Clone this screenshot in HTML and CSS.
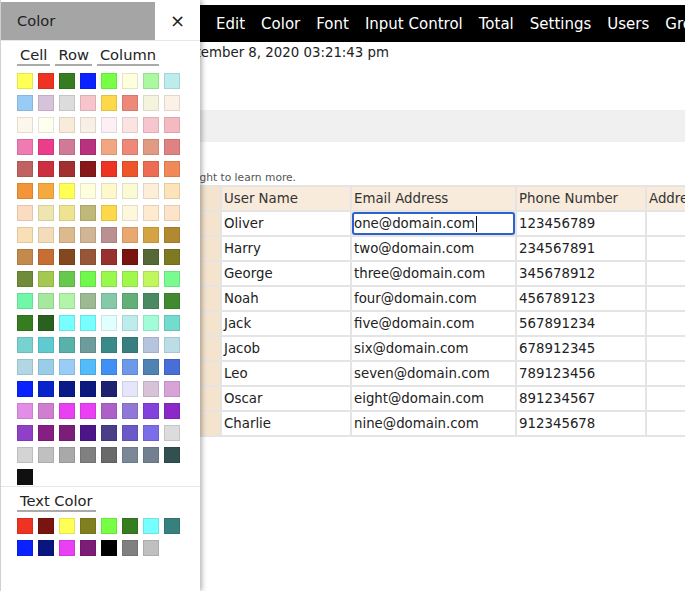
FILE: index.html
```html
<!DOCTYPE html>
<html lang="en">
<head>
<meta charset="utf-8">
<title>Grid</title>
<link rel="stylesheet" href="styles.css">
</head>
<body>
<div class="app">
  <nav class="menubar">
    <span class="menu-item">Edit</span>
    <span class="menu-item">Color</span>
    <span class="menu-item">Font</span>
    <span class="menu-item">Input Control</span>
    <span class="menu-item">Total</span>
    <span class="menu-item">Settings</span>
    <span class="menu-item">Users</span>
    <span class="menu-item">Groups</span>
  </nav>
  <div class="stamp"><span>September 8, 2020 03:21:43 pm</span></div>
  <div class="toolbar"></div>
  <p class="hint"><span>Select a cell and use the menu on the right to learn more.</span></p>
  <div class="sheet-wrap">
    <table class="sheet">
      <colgroup>
        <col class="c-rh"><col class="c-name"><col class="c-email"><col class="c-phone"><col class="c-addr">
      </colgroup>
      <thead>
        <tr><th class="rh"></th><th>User Name</th><th>Email Address</th><th>Phone Number</th><th>Address</th></tr>
      </thead>
      <tbody>
        <tr><td class="rh"></td><td>Oliver</td><td class="active">one@domain.com<span class="caret"></span></td><td>123456789</td><td></td></tr>
        <tr><td class="rh"></td><td>Harry</td><td>two@domain.com</td><td>234567891</td><td></td></tr>
        <tr><td class="rh"></td><td>George</td><td>three@domain.com</td><td>345678912</td><td></td></tr>
        <tr><td class="rh"></td><td>Noah</td><td>four@domain.com</td><td>456789123</td><td></td></tr>
        <tr><td class="rh"></td><td>Jack</td><td>five@domain.com</td><td>567891234</td><td></td></tr>
        <tr><td class="rh"></td><td>Jacob</td><td>six@domain.com</td><td>678912345</td><td></td></tr>
        <tr><td class="rh"></td><td>Leo</td><td>seven@domain.com</td><td>789123456</td><td></td></tr>
        <tr><td class="rh"></td><td>Oscar</td><td>eight@domain.com</td><td>891234567</td><td></td></tr>
        <tr><td class="rh"></td><td>Charlie</td><td>nine@domain.com</td><td>912345678</td><td></td></tr>
      </tbody>
    </table>
  </div>
</div>

<aside class="panel">
  <div class="panel-head">
    <div class="panel-title">Color</div>
    <div class="panel-close">×</div>
  </div>
  <div class="tabs">
    <span class="tab">Cell</span>
    <span class="tab">Row</span>
    <span class="tab">Column</span>
  </div>
  <div class="swatches">
    <i class="sw" style="background:#ffff55"></i><i class="sw" style="background:#ee3322"></i><i class="sw" style="background:#367d20"></i><i class="sw" style="background:#0a22ff"></i><i class="sw" style="background:#77ff44"></i><i class="sw" style="background:#ffffdd"></i><i class="sw" style="background:#aaf8a0"></i><i class="sw" style="background:#bcecec"></i>
    <i class="sw" style="background:#99ccf5"></i><i class="sw" style="background:#d6c2da"></i><i class="sw" style="background:#dcdcdc"></i><i class="sw" style="background:#f7c4cc"></i><i class="sw" style="background:#fcd84a"></i><i class="sw" style="background:#ee8878"></i><i class="sw" style="background:#f3f3de"></i><i class="sw" style="background:#fbf1e4"></i>
    <i class="sw" style="background:#fdf6ea"></i><i class="sw" style="background:#fffff0"></i><i class="sw" style="background:#f8ebda"></i><i class="sw" style="background:#f8efe6"></i><i class="sw" style="background:#fdf0f4"></i><i class="sw" style="background:#fae3e0"></i><i class="sw" style="background:#f7c5cd"></i><i class="sw" style="background:#f5b9c1"></i>
    <i class="sw" style="background:#f07ab2"></i><i class="sw" style="background:#ec3d8c"></i><i class="sw" style="background:#d07a96"></i><i class="sw" style="background:#b9327e"></i><i class="sw" style="background:#f2a682"></i><i class="sw" style="background:#ee8878"></i><i class="sw" style="background:#e19b82"></i><i class="sw" style="background:#e08282"></i>
    <i class="sw" style="background:#c06262"></i><i class="sw" style="background:#cc3040"></i><i class="sw" style="background:#a33030"></i><i class="sw" style="background:#86181a"></i><i class="sw" style="background:#ee3322"></i><i class="sw" style="background:#ee5528"></i><i class="sw" style="background:#ee6c54"></i><i class="sw" style="background:#f08858"></i>
    <i class="sw" style="background:#f39438"></i><i class="sw" style="background:#f5aa40"></i><i class="sw" style="background:#ffff55"></i><i class="sw" style="background:#ffffde"></i><i class="sw" style="background:#fff8cc"></i><i class="sw" style="background:#fafad4"></i><i class="sw" style="background:#fdeed8"></i><i class="sw" style="background:#fde3b8"></i>
    <i class="sw" style="background:#fbdcc0"></i><i class="sw" style="background:#eee6b0"></i><i class="sw" style="background:#efe392"></i><i class="sw" style="background:#c0b878"></i><i class="sw" style="background:#fcd84a"></i><i class="sw" style="background:#fdf7dc"></i><i class="sw" style="background:#fdeacf"></i><i class="sw" style="background:#fde4c8"></i>
    <i class="sw" style="background:#f9dfb5"></i><i class="sw" style="background:#f3dcb9"></i><i class="sw" style="background:#dcba8e"></i><i class="sw" style="background:#d2b594"></i><i class="sw" style="background:#ba9090"></i><i class="sw" style="background:#e9a870"></i><i class="sw" style="background:#d4a442"></i><i class="sw" style="background:#b28830"></i>
    <i class="sw" style="background:#c48a4c"></i><i class="sw" style="background:#c66e34"></i><i class="sw" style="background:#84481e"></i><i class="sw" style="background:#985638"></i><i class="sw" style="background:#993030"></i><i class="sw" style="background:#7a1410"></i><i class="sw" style="background:#566838"></i><i class="sw" style="background:#7f7a22"></i>
    <i class="sw" style="background:#718c38"></i><i class="sw" style="background:#a5c850"></i><i class="sw" style="background:#66c84c"></i><i class="sw" style="background:#70f84c"></i><i class="sw" style="background:#98f84c"></i><i class="sw" style="background:#a0f84c"></i><i class="sw" style="background:#c0f85c"></i><i class="sw" style="background:#7afb90"></i>
    <i class="sw" style="background:#70f8a8"></i><i class="sw" style="background:#a6e89e"></i><i class="sw" style="background:#b2f5a8"></i><i class="sw" style="background:#9cba92"></i><i class="sw" style="background:#84caa9"></i><i class="sw" style="background:#62b078"></i><i class="sw" style="background:#4a8a60"></i><i class="sw" style="background:#428a30"></i>
    <i class="sw" style="background:#367d20"></i><i class="sw" style="background:#2a6020"></i><i class="sw" style="background:#77ffff"></i><i class="sw" style="background:#77ffff"></i><i class="sw" style="background:#e2ffff"></i><i class="sw" style="background:#bcecec"></i><i class="sw" style="background:#a0fdd8"></i><i class="sw" style="background:#72dccf"></i>
    <i class="sw" style="background:#7ad2d0"></i><i class="sw" style="background:#5ecbd0"></i><i class="sw" style="background:#58b2aa"></i><i class="sw" style="background:#6c9c9c"></i><i class="sw" style="background:#3a8a8a"></i><i class="sw" style="background:#387f7f"></i><i class="sw" style="background:#b6c4de"></i><i class="sw" style="background:#bbdee6"></i>
    <i class="sw" style="background:#b3d6e4"></i><i class="sw" style="background:#9acde8"></i><i class="sw" style="background:#9acdf6"></i><i class="sw" style="background:#52bcfa"></i><i class="sw" style="background:#4090f6"></i><i class="sw" style="background:#6e98e8"></i><i class="sw" style="background:#5082b2"></i><i class="sw" style="background:#4a6ed8"></i>
    <i class="sw" style="background:#0a22ff"></i><i class="sw" style="background:#0a24cc"></i><i class="sw" style="background:#0a1a88"></i><i class="sw" style="background:#0c1a80"></i><i class="sw" style="background:#1e2070"></i><i class="sw" style="background:#e6e6fa"></i><i class="sw" style="background:#d8c2d8"></i><i class="sw" style="background:#d8a4d8"></i>
    <i class="sw" style="background:#e28ee6"></i><i class="sw" style="background:#d07fd0"></i><i class="sw" style="background:#ea40f4"></i><i class="sw" style="background:#ea40f4"></i><i class="sw" style="background:#ae60c8"></i><i class="sw" style="background:#9278d6"></i><i class="sw" style="background:#8442dc"></i><i class="sw" style="background:#8c28c8"></i>
    <i class="sw" style="background:#9040c8"></i><i class="sw" style="background:#852082"></i><i class="sw" style="background:#7c1e78"></i><i class="sw" style="background:#4c1688"></i><i class="sw" style="background:#4a3e88"></i><i class="sw" style="background:#6a5ac8"></i><i class="sw" style="background:#7b6ee8"></i><i class="sw" style="background:#dcdcdc"></i>
    <i class="sw" style="background:#d4d4d4"></i><i class="sw" style="background:#c0c0c0"></i><i class="sw" style="background:#a9a9a9"></i><i class="sw" style="background:#808080"></i><i class="sw" style="background:#6a6a6a"></i><i class="sw" style="background:#7a8898"></i><i class="sw" style="background:#728090"></i><i class="sw" style="background:#335050"></i>
    <i class="sw" style="background:#101010"></i>
  </div>
  <div class="text-colors">
    <div class="tabs"><span class="tab">Text Color</span></div>
    <div class="swatches">
      <i class="sw" style="background:#ee3322"></i><i class="sw" style="background:#7a1410"></i><i class="sw" style="background:#ffff55"></i><i class="sw" style="background:#808020"></i><i class="sw" style="background:#77ff44"></i><i class="sw" style="background:#367d20"></i><i class="sw" style="background:#77ffff"></i><i class="sw" style="background:#378080"></i>
      <i class="sw" style="background:#0a22ff"></i><i class="sw" style="background:#0a1680"></i><i class="sw" style="background:#ea40f4"></i><i class="sw" style="background:#7c1e78"></i><i class="sw" style="background:#000000"></i><i class="sw" style="background:#808080"></i><i class="sw" style="background:#c0c0c0"></i>
    </div>
  </div>
</aside>
</body>
</html>
```
FILE: styles.css
```css
html, body {
  margin: 0;
  padding: 0;
  overflow: hidden;
  background: #fff;
}
body {
  font-family: "DejaVu Sans", Verdana, sans-serif;
  color: #222;
  width: 685px;
  height: 591px;
  position: relative;
}

.app {
  display: flex;
  flex-direction: column;
}

.menubar {
  margin-top: 5px;
  height: 37px;
  background: #000;
  display: flex;
  align-items: center;
  padding-left: 208px;
  white-space: nowrap;
  overflow: hidden;
}
.menu-item {
  color: #fff;
  font-size: 15px;
  padding: 0 8px;
  flex: none;
}

.stamp {
  margin-top: 2px;
  width: 389px;
  display: flex;
  justify-content: flex-end;
  line-height: 18px;
  font-size: 13.33px;
  white-space: nowrap;
  color: #222;
}
.stamp span,
.hint span {
  flex: none;
}

.toolbar {
  margin-top: 48px;
  height: 32px;
  background: #f0f0f0;
}

.hint {
  margin: 29px 0 0;
  width: 296px;
  display: flex;
  justify-content: flex-end;
  line-height: 14px;
  font-size: 10.67px;
  color: #555;
  white-space: nowrap;
}

.sheet-wrap {
  padding-left: 168px;
  overflow: hidden;
}
.sheet {
  border-collapse: separate;
  border-spacing: 2px;
  background: #e4e4e4;
  table-layout: fixed;
  width: 611px;
  font-size: 13.33px;
}
.c-rh { width: 50px; }
.c-name { width: 128px; }
.c-email { width: 163px; }
.c-phone { width: 128px; }
.c-addr { width: 130px; }

.sheet th,
.sheet td {
  height: 23px;
  padding: 0 2px;
  line-height: 23px;
  text-align: left;
  font-weight: normal;
  white-space: nowrap;
  overflow: hidden;
  background: #fff;
  color: #222;
}
.sheet th {
  background: #f8ebdb;
  color: #333;
}
.sheet .rh {
  background: #f4e3cd;
}
.sheet td.active {
  box-shadow: inset 0 0 0 2px #2f62c8;
  border-radius: 3px;
}
.caret {
  display: inline-block;
  width: 1px;
  height: 16px;
  background: #111;
  vertical-align: middle;
  margin-left: 1px;
}

/* Color panel overlay */
.panel {
  position: absolute;
  top: 0;
  left: 0;
  width: 199px;
  height: 591px;
  background: #fff;
  border-left: 1px solid #d0d0d0;
  box-shadow: 2px 0 5px rgba(0, 0, 0, 0.3);
  display: flex;
  flex-direction: column;
}
.panel-head {
  display: flex;
  padding-top: 2px;
  border-bottom: 1px solid #e8e8e8;
}
.panel-title {
  width: 138px;
  height: 38px;
  padding-left: 16px;
  background: #a5a5a5;
  font-size: 14.67px;
  line-height: 38px;
  color: #222;
}
.panel-close {
  flex: 1;
  text-align: center;
  line-height: 38px;
  font-size: 18px;
  color: #222;
}

.tabs {
  display: flex;
  gap: 5px;
  padding-left: 16px;
  margin-top: 5px;
}
.tab {
  font-size: 14.67px;
  line-height: 18px;
  padding: 0 3px;
  border-bottom: 2px solid #aaa;
  color: #222;
}

.swatches {
  display: grid;
  grid-template-columns: repeat(8, 16px);
  grid-auto-rows: 16px;
  gap: 6px 5px;
  padding-left: 16px;
  margin-top: 7px;
}
.sw {
  display: block;
  width: 16px;
  height: 16px;
  box-sizing: border-box;
  box-shadow: inset 0 0 0 1px rgba(0, 0, 0, 0.1);
}

.text-colors {
  margin-top: 1px;
  border-top: 1px solid #e6e6e6;
  padding-top: 5px;
}
.text-colors .tabs {
  margin-top: 0;
}
.text-colors .swatches {
  margin-top: 6px;
}
```
